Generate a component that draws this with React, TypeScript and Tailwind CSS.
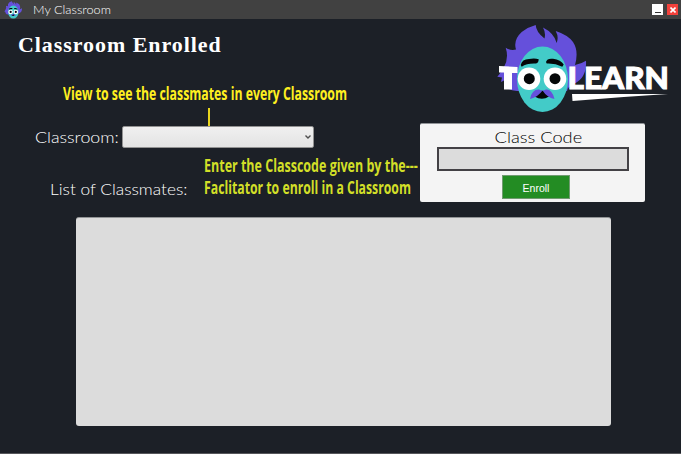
import React from "react";

const geo = "font-['Lato','Open_Sans',sans-serif]";
const note = "block origin-left whitespace-nowrap font-['Open_Sans','Noto_Sans',sans-serif] font-bold";

function Face() {
  return (
    <g>
      <path
        fill="#6550db"
        d="M497.300 76.700Q500 74 501.700 70L504 67Q509 58 505.700 47.700Q511 51 516 49.500Q513 40 521.700 32Q528 27 535.700 25Q536 32 544.500 38.500Q546 33 543 27.500Q554 33 556.700 43Q559 37 555.700 31Q568 35 573 42Q579 51 575 65Q581 64 586 60.700Q587 78 574 84L568 88L567 91L517 91Q508 91 504 85L505 80L501 82L502 77.500Z"
      />
      <ellipse cx="542.500" cy="79.200" rx="25.500" ry="32.800" fill="#43cbc8" />
      <path d="M520.700 65Q522 59 529 59Q535 58 538.700 59.300Q538.500 63 536 63.500Q527 63 521.700 66.700ZM546 62Q547 58 553 58.800Q561 60 563.700 64.500L562.300 66.700Q555 63 546.700 63.500Z" fill="#050708" />
      <path d="M534.500 96.500Q542.500 85 549 96.500Q542 101 534.500 96.500Z" fill="#050708" />
      <path d="M530 99Q532 89 539 89.500Q542.500 91.500 546 89.500Q552 89 554.500 99Q547 97.500 542.500 90.500Q538 97 530 99Z" fill="#6550db" />
      <circle cx="529" cy="78.700" r="11.300" fill="white" />
      <circle cx="555" cy="78.700" r="11.300" fill="white" />
      <circle cx="529.300" cy="78.700" r="5.500" fill="#050708" />
      <circle cx="555" cy="78.700" r="5.500" fill="#050708" />
    </g>
  );
}

function Logo() {
  return (
    <svg viewBox="485 19 196 105" className="h-[105px] w-[196px]" role="img" aria-label="Toolearn">
      <Face />
      <path d="M499 66L517.500 67V73H512V89.500H504V72.500H499Z" fill="white" />
      <text
        x="567.500"
        y="89"
        textLength="101.500"
        lengthAdjust="spacingAndGlyphs"
        fill="white"
        stroke="white"
        strokeWidth="1"
        className="font-['Lato',sans-serif] text-[30px] font-black"
      >
        LEARN
      </text>
      <path d="M572 94L668 94Q620 97 572.500 101Z" fill="white" />
    </svg>
  );
}

export default function App() {
  return (
    <div className="flex h-[454px] w-[681px] flex-col overflow-hidden border-b border-[#55565a] bg-[#1c2027]">
      <header className="flex h-[19px] shrink-0 items-center bg-[#414141] pl-[3px] pr-[3px]">
        <svg viewBox="495 24 92 90" className="h-[18px] w-5"><Face /></svg>
        <span className={`${geo} ml-[10px] w-[82px] origin-left scale-x-[1.06] whitespace-nowrap text-[12px] font-light leading-[18px] text-white`}>
          My Classroom
        </span>
        <div className="ml-auto flex gap-1">
          <button aria-label="Minimize" className="flex h-[11px] w-[11px] items-end justify-center bg-white pb-[2px]">
            <span className="h-px w-[6px] bg-[#333]" />
          </button>
          <button aria-label="Close" className="flex h-[11px] w-[11px] items-center justify-center bg-[#f3413b]">
            <svg viewBox="0 0 6 6" className="h-[6px] w-[6px]"><path d="M.5.5L5.500 5.500M5.500.5L.5 5.500" stroke="white" strokeWidth="1.6" /></svg>
          </button>
        </div>
      </header>
      <div className="flex h-[198px] shrink-0">
        <section className="w-[420px] shrink-0">
          <h1 className="ml-[18px] mt-[13px] h-[28px] w-[200px] origin-left scale-x-[1.045] whitespace-nowrap font-['Liberation_Serif',serif] text-[21px] font-bold leading-[26px] tracking-[0.92px] text-white">
            Classroom Enrolled
          </h1>
          <div className="ml-[63px] mt-[24px] h-[24px] w-[285px]">
            <span className={`${note} scale-x-[.723] text-[17px] leading-[20px] text-[#fff020]`}>
              View to see the classmates in every Classroom
            </span>
          </div>
          <div className="ml-[208px] h-[18px] w-[2px] bg-[#e8d51d]" />
          <div className="ml-[35px] flex h-[22px]">
            <label className={`${geo} w-[87px] origin-left whitespace-nowrap text-[16px] font-light leading-[21px] text-white`}>
              <span className="inline-block origin-left scale-x-[1.11]">Classroom:</span>
            </label>
            <button aria-label="Classroom" className="flex h-[22px] w-[192px] items-center justify-end rounded-[2px] border border-[#929292] bg-linear-to-b from-[#f0f0f0] to-[#e3e3e3] pr-[2px]">
              <svg viewBox="0 0 6 4" className="h-1 w-[6px]"><path d="M.5.5L3 3L5.500.5" fill="none" stroke="#505050" strokeWidth="1.4" /></svg>
            </button>
          </div>
          <div className="ml-[50px] mt-[7px] flex">
            <div className={`${geo} w-[154px] pt-[23px] text-[16px] font-light leading-[21px] text-white`}>
              <span className="inline-block origin-left scale-x-[1.08] whitespace-nowrap">List of Classmates:</span>
            </div>
            <div className="w-[214px] text-[17px] leading-[22px] text-[#d2df28]">
              <span className={`${note} scale-x-[.735]`}>Enter the Classcode given by the---</span>
              <span className={`${note} scale-x-[.721]`}>Faclitator to enroll in a Classroom</span>
            </div>
          </div>
        </section>
        <section className="flex w-[261px] flex-col">
          <div className="flex h-[104px] justify-end"><Logo /></div>
          <div className="flex h-[79px] w-[225px] flex-col items-center rounded-[2px] border-t border-[#909397] bg-[#f4f4f4]">
            <span className={`${geo} mt-[2px] ml-[11px] h-[21px] scale-x-[1.14] text-[16px] leading-[21px] text-black font-light`}>Class Code</span>
            <input aria-label="Class Code" className="block h-6 w-[192px] border-2 border-[#434145] bg-[#dcdcdc] outline-none" />
            <button className="ml-[7px] mt-1 h-6 w-[68px] border border-[#719b71] bg-[#238c23] font-['Liberation_Sans',Arial,sans-serif] text-[10.500px] leading-[22px] text-white"><span className="relative top-px">Enroll</span></button>
          </div>
        </section>
      </div>
      <main className="ml-[76px] h-[209px] w-[535px] rounded-[3px] border-t border-[#929496] bg-[#dcdcdc]" />
    </div>
  );
}
